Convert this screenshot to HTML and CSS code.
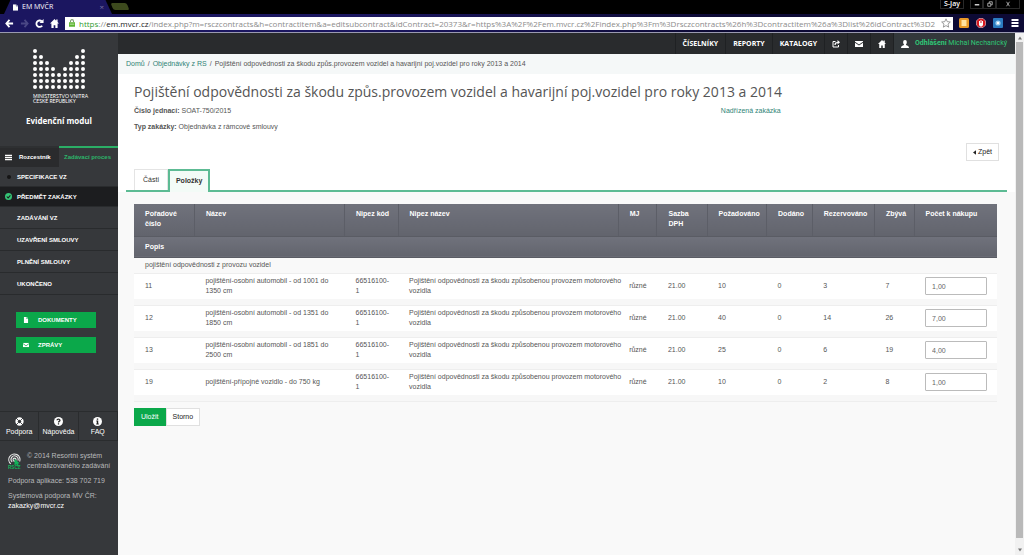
FILE: index.html
```html
<!DOCTYPE html>
<html lang="cs">
<head>
<meta charset="utf-8">
<title>EM MVČR</title>
<link rel="stylesheet" href="styles.css">
</head>
<body>
<svg class="defs" aria-hidden="true">
  <symbol id="mail" viewBox="0 0 16 12"><path d="M0 0h16v1.500L8 7 0 1.500zM0 3.500l8 5.500 8-5.500V12H0z"/></symbol>
  <symbol id="home" viewBox="0 0 16 16"><path d="M8 0 0 8h2.500v8h4v-5h3v5h4V8H16l-2.500-2.500V1h-2.500v2z"/></symbol>
  <symbol id="file" viewBox="0 0 12 16"><path d="M0 0h7v5h5v11H0zM8 0l4 4H8z"/></symbol>
</svg>

<div class="browser">
  <div class="tab-strip">
    <div class="browser-tab">
      <svg class="i-page" viewBox="0 0 12 16"><use href="#file"/></svg>
      <span>EM MVČR</span>
      <button class="tab-close" aria-label="Zavřít kartu">×</button>
    </div>
    <button class="new-tab" aria-label="Nová karta"></button>
    <div class="window-controls">
      <button class="profile">S-Jay</button>
      <button aria-label="Minimalizovat"><svg viewBox="0 0 8 8"><path d="M1 4h6v2H1z"/></svg></button>
      <button aria-label="Obnovit"><svg viewBox="0 0 8 8"><path class="line" d="M1 3h4v4H1zM3 3V1h4v4H5"/></svg></button>
      <button class="win-close" aria-label="Zavřít"><svg viewBox="0 0 8 8"><path class="line" d="m2 1 4 6M6 1 2 7"/></svg></button>
    </div>
  </div>
  <div class="toolbar">
    <button aria-label="Zpět"><svg viewBox="0 0 10 10"><path class="stroke" d="M9 5H2M5 1 1.500 5 5 9"/></svg></button>
    <button class="off" aria-label="Vpřed"><svg viewBox="0 0 10 10"><path class="stroke" d="M1 5h7M5 1l3.500 4L5 9"/></svg></button>
    <button aria-label="Obnovit stránku"><svg viewBox="0 0 10 10"><path class="stroke" d="M8 7.500A3.600 3.600 0 1 1 7.500 2.500"/><path d="M9.500 0v4.500H5z"/></svg></button>
    <button aria-label="Domů"><svg viewBox="0 0 16 16"><use href="#home"/></svg></button>
    <div class="address">
      <svg class="lock" viewBox="0 0 8 10"><path fill="#5cb531" d="M0 4h8v6H0z"/><path fill="none" stroke="#7d9b6e" stroke-width="1.400" d="M2 4V2.500a2 2 0 0 1 4 0V4"/><path fill="#d8efc9" d="M1 6h6v1H1z"/></svg>
      <div class="url"><span class="secure">https</span>://<b>em.mvcr.cz</b>/index.php?m=rsczcontracts&amp;h=contractitem&amp;a=editsubcontract&amp;idContract=20373&amp;r=https%3A%2F%2Fem.mvcr.cz%2Findex.php%3Fm%3Drsczcontracts%26h%3Dcontractitem%26a%3Dlist%26idContract%3D2</div>
      <svg class="star" viewBox="0 0 12 12"><path d="m6 1 1.500 3.400 3.700.4-2.800 2.500.8 3.700L6 9.100 2.800 11l.8-3.700L.8 4.800l3.700-.4z"/></svg>
    </div>
    <button class="ext" aria-label="Poznámky"><svg viewBox="0 0 10 10"><rect width="10" height="10" rx="1.500" fill="#e99a28"/><path fill="#ffe1a0" d="M2.500 2h5v6h-5z"/></svg></button>
    <button class="ext" aria-label="Blokování reklam"><svg viewBox="0 0 10 10"><path fill="#d71920" stroke="#f6d5d5" stroke-width=".6" d="M3 .4h4L9.600 3v4L7 9.600H3L.4 7V3z"/><path fill="#fff" d="M3 3h1v2h.5V2h1v3H6V3h1v4L6 8.500H4L3 7z"/></svg></button>
    <button class="ext" aria-label="Rozšíření"><svg viewBox="0 0 10 10"><rect width="10" height="10" rx="1" fill="#2b7cc0"/><circle cx="5" cy="5" r="2.600" fill="#9ccdf0"/><circle cx="5" cy="5" r="1.200" fill="#fff"/></svg></button>
    <button class="ext" aria-label="Nabídka"><svg viewBox="0 0 10 10"><path fill="#fff" d="M1.500 1h7v2h-7zm0 3h7v2h-7zm0 3h7v2h-7z"/></svg></button>
  </div>
</div>

<div class="viewport">
  <aside class="sidebar">
    <div class="brand">
      <svg class="logo" viewBox="0 0 54 42"><path d="M3 3v36.100M9 9v30.100M15 15v24.100M21 21v18.100M27 27v12.100M33 21v18.100M39 15v24.100M45 9v30.100M51 3v36.100"/></svg>
      <p class="ministry">MINISTERSTVO VNITRA<br>ČESKÉ REPUBLIKY</p>
      <p class="module">Evidenční modul</p>
    </div>
    <nav>
      <div class="side-tabs">
        <a href="#"><svg viewBox="0 0 10 10"><path d="M0 1h10v2H0zm0 3h10v2H0zm0 3h10v2H0z"/></svg>Rozcestník</a>
        <a href="#" class="on">Zadávací proces</a>
      </div>
      <ul class="steps">
        <li><a href="#"><i class="dot"></i>SPECIFIKACE VZ</a></li>
        <li class="current"><a href="#"><svg viewBox="0 0 10 10"><circle cx="5" cy="5" r="5" fill="#35c576"/><path fill="none" stroke="#1c1d1f" stroke-width="1.500" d="m2.500 5 2 2 3.200-3.500"/></svg>PŘEDMĚT ZAKÁZKY</a></li>
        <li><a href="#">ZADÁVÁNÍ VZ</a></li>
        <li><a href="#">UZAVŘENÍ SMLOUVY</a></li>
        <li><a href="#">PLNĚNÍ SMLOUVY</a></li>
        <li><a href="#">UKONČENO</a></li>
      </ul>
    </nav>
    <div class="side-actions">
      <button><svg viewBox="0 0 12 16"><use href="#file"/></svg><span>DOKUMENTY</span></button>
      <button><svg viewBox="0 0 16 12"><use href="#mail"/></svg><span>ZPRÁVY</span></button>
    </div>
    <div class="help">
      <a href="#"><svg viewBox="0 0 10 10"><circle cx="5" cy="5" r="3.300" fill="none" stroke="#fff" stroke-width="2.600"/><path stroke="#36383b" stroke-width="1" d="m1 1 2.500 2.500M9 1 6.500 3.500M1 9l2.500-2.500M9 9 6.500 6.500"/></svg>Podpora</a>
      <a href="#"><svg viewBox="0 0 10 10"><circle cx="5" cy="5" r="5" fill="#fff"/><path fill="none" stroke="#222" stroke-width="1.400" d="M3.300 3.700C3.400 1.800 6.700 1.800 6.600 3.700 6.500 4.800 5 4.700 5 6.200M5 7v1.400"/></svg>Nápověda</a>
      <a href="#"><svg viewBox="0 0 10 10"><circle cx="5" cy="5" r="5" fill="#fff"/><path fill="#222" d="M4.200 1.600h1.600v1.500H4.200zM3.700 4h2.100v3.200h.6v1.100H3.600V7.200h.6V5h-.5z"/></svg>FAQ</a>
    </div>
    <footer>
      <div class="copy">
        <svg viewBox="0 0 14 18"><g fill="none" stroke="#e8e8e8" stroke-width="1.200"><path d="M3 11.500A6 6 0 1 1 12.500 9M4.500 9.500A3.800 3.800 0 1 1 10.700 8"/><circle cx="7" cy="7" r="1.600"/></g><path fill="#12b35a" d="m7 6 5.500 5-2 .3L12 14l-1.500.7L9.200 12 7 13z"/><text x="0" y="17.500">RSCZ</text></svg>
        <p>© 2014 Resortní systém<br>centralizovaného zadávání</p>
      </div>
      <p>Podpora aplikace: 538 702 719</p>
      <p>Systémová podpora MV ČR:<br><a href="#">zakazky@mvcr.cz</a></p>
    </footer>
  </aside>

  <div class="page">
    <nav class="topbar">
      <a href="#">ČÍSELNÍKY</a>
      <a href="#">REPORTY</a>
      <a href="#">KATALOGY</a>
      <a href="#" class="icon" aria-label="Odkaz"><svg viewBox="0 0 16 16"><path fill="none" stroke="#fff" stroke-width="2" d="M7 3H2v11h11v-4"/><path fill="none" stroke="#fff" stroke-width="2.400" d="M6 10c0-4 2-5 6-5"/><path d="M11 0v9l5-4.500z"/></svg></a>
      <a href="#" class="icon" aria-label="Zprávy"><svg viewBox="0 0 16 12"><use href="#mail"/></svg></a>
      <a href="#" class="icon" aria-label="Domů"><svg viewBox="0 0 16 16"><use href="#home"/></svg></a>
      <a href="#" class="user"><svg viewBox="0 0 16 16"><path d="M8 0c5 0 4 7 2 9v1c3 1 6 2 6 6H0c0-4 3-5 6-6V9C4 7 3 0 8 0z"/></svg><span><b>Odhlášení</b> Michal Nechanický</span></a>
    </nav>
    <div class="crumbs"><a href="#">Domů</a><i>/</i><a href="#">Objednávky z RS</a><i>/</i><span>Pojištění odpovědnosti za škodu způs.provozem vozidel a havarijní poj.vozidel pro roky 2013 a 2014</span></div>
    <header class="head">
      <h1>Pojištění odpovědnosti za škodu způs.provozem vozidel a havarijní poj.vozidel pro roky 2013 a 2014</h1>
      <div class="meta">
        <div><p><b>Číslo jednací:</b> SOAT-750/2015</p><p><b>Typ zakázky:</b> Objednávka z rámcové smlouvy</p></div>
        <p><a href="#">Nadřízená zakázka</a></p>
      </div>
      <div class="back"><button class="btn"><svg viewBox="0 0 4 6"><path d="M4 0v6L0 3z"/></svg>Zpět</button></div>
      <div class="tabs"><a href="#">Části</a><a href="#" class="on">Položky</a></div>
    </header>
    <form class="items">
      <table>
        <colgroup><col class="c-no"><col class="c-name"><col class="c-code"><col class="c-desc"><col class="c-mj"><col class="c-vat"><col class="c-req"><col class="c-del"><col class="c-res"><col class="c-left"><col class="c-buy"></colgroup>
        <thead>
          <tr><th>Pořadové číslo</th><th>Název</th><th>Nipez kód</th><th>Nipez název</th><th>MJ</th><th>Sazba<br>DPH</th><th>Požadováno</th><th>Dodáno</th><th>Rezervováno</th><th>Zbývá</th><th>Počet k nákupu</th></tr>
          <tr class="sub"><th colspan="11">Popis</th></tr>
        </thead>
        <tbody>
          <tr class="note"><td colspan="11">pojištění odpovědnosti z provozu vozidel</td></tr>
          <tr><td>11</td><td>pojištění-osobní automobil - od 1001 do 1350 cm</td><td>66516100-1</td><td class="desc">Pojištění odpovědnosti za škodu způsobenou provozem motorového<br>vozidla</td><td>různé</td><td>21.00</td><td>10</td><td>0</td><td>3</td><td>7</td><td><input aria-label="Počet k nákupu, položka 11" value="1,00"></td></tr>
          <tr class="gap"><td colspan="11"></td></tr>
          <tr><td>12</td><td>pojištění-osobní automobil - od 1351 do 1850 cm</td><td>66516100-1</td><td class="desc">Pojištění odpovědnosti za škodu způsobenou provozem motorového<br>vozidla</td><td>různé</td><td>21.00</td><td>40</td><td>0</td><td>14</td><td>26</td><td><input aria-label="Počet k nákupu, položka 12" value="7,00"></td></tr>
          <tr class="gap"><td colspan="11"></td></tr>
          <tr><td>13</td><td>pojištění-osobní automobil - od 1851 do 2500 cm</td><td>66516100-1</td><td class="desc">Pojištění odpovědnosti za škodu způsobenou provozem motorového<br>vozidla</td><td>různé</td><td>21.00</td><td>25</td><td>0</td><td>6</td><td>19</td><td><input aria-label="Počet k nákupu, položka 13" value="4,00"></td></tr>
          <tr class="gap"><td colspan="11"></td></tr>
          <tr><td>19</td><td>pojištění-přípojné vozidlo - do 750 kg</td><td>66516100-1</td><td class="desc">Pojištění odpovědnosti za škodu způsobenou provozem motorového<br>vozidla</td><td>různé</td><td>21.00</td><td>10</td><td>0</td><td>2</td><td>8</td><td><input aria-label="Počet k nákupu, položka 19" value="1,00"></td></tr>
          <tr class="gap"><td colspan="11"></td></tr>
        </tbody>
      </table>
      <div class="form-actions"><button type="button" class="btn save">Uložit</button><button type="button" class="btn strong">Storno</button></div>
    </form>
  </div>

  <div class="scrollbar" aria-hidden="true">
    <svg viewBox="0 0 6 6"><path d="M3 1.500 5 4.500H1z"/></svg>
    <div class="thumb"></div>
    <svg viewBox="0 0 6 6"><path d="M3 4.500 1 1.500h4z"/></svg>
  </div>
</div>
</body>
</html>
```

FILE: styles.css
```css
* { box-sizing: border-box; }
body {
  margin: 0;
  min-height: 100vh;
  display: flex;
  flex-direction: column;
  font: 7px/10px "Liberation Sans", Arial, sans-serif;
  color: #555;
  background: #f9f9f9;
}
p, h1, ul { margin: 0; padding: 0; }
ul { list-style: none; }
a { color: inherit; text-decoration: none; }
button { font: inherit; color: inherit; border: 0; background: none; padding: 0; }
svg { display: block; fill: currentColor; flex: none; }
.defs { display: none; }

/* browser frame */
.browser { background: #000; color: #fff; border-bottom: 1px solid #9a9ab0; font-family: "Open Sans", sans-serif; }
.tab-strip { display: flex; align-items: flex-start; height: 14px; padding-left: 4px; }
.browser-tab {
  display: flex; align-items: center; gap: 4px;
  width: 108px; height: 14px; padding: 0 8px 0 9px;
  background: #1b1660; font-size: 7px; line-height: 12px;
  clip-path: polygon(6% 0, 94% 0, 100% 100%, 0 100%);
}
.browser-tab .i-page { width: 5px; height: 7px; }
.tab-close { margin-left: auto; color: #77739f; font-size: 8px; }
.new-tab { width: 16px; height: 7px; margin-top: 3px; background: #3d4a1d; border-radius: 2px; transform: skewX(22deg); }
.window-controls { display: flex; margin-left: auto; padding-right: 4px; }
.window-controls button { display: flex; align-items: center; justify-content: center; width: 13px; height: 9px; border: 1px solid #292929; border-top: 0; color: #ccc; }
.window-controls svg { width: 6px; height: 6px; }
.window-controls .profile { width: 24px; margin-right: 6px; color: #fff; font-size: 7px; font-weight: 600; }
.window-controls .win-close { width: 24px; }
.line { fill: none; stroke: currentColor; stroke-width: 1; }
.stroke { fill: none; stroke: currentColor; stroke-width: 2; }
.toolbar { display: flex; align-items: center; gap: 6px; height: 18px; padding: 0 4px 0 5px; background: linear-gradient(90deg, #1b1660 35%, #0d0a35 70%); }
.toolbar button svg { width: 9px; height: 9px; }
.toolbar .off { color: #4a4785; }
.address { flex: 1; min-width: 0; display: flex; align-items: center; height: 13px; padding: 0 2px 0 4px; background: #fff; }
.lock { width: 6px; height: 8px; }
.url { flex: 1; min-width: 0; margin-left: 4px; overflow: hidden; white-space: nowrap; font-size: 8px; line-height: 13px; color: #8b8b8b; }
.url b { font-weight: 400; color: #222; }
.url .secure { color: #2f9b2f; }
.star { width: 10px; height: 10px; fill: none; stroke: #888; }
.toolbar .ext svg { width: 10px; height: 10px; }
.ext + .ext { margin-left: 1px; }

.viewport { flex: 1; display: flex; }

/* sidebar */
.sidebar { flex: none; width: 118px; background: #36383b; color: #fff; }
.brand { height: 113px; padding-top: 15px; text-align: center; }
.logo { width: 54px; height: 42px; margin: 0 auto; }
.logo path { fill: none; stroke: #fff; stroke-width: 4; stroke-linecap: round; stroke-dasharray: 0 6; }
.ministry { width: 52px; margin: 4px auto 0; text-align: left; white-space: nowrap; font: 400 5px/5px Lato, sans-serif; }
.module { margin-top: 11px; font: 700 8px/12px "Open Sans", sans-serif; }
.side-tabs { display: grid; grid-template-columns: 1fr 1fr; font-weight: 700; line-height: 19px; }
.side-tabs a { display: flex; align-items: center; gap: 7px; padding-left: 5px; background: #2a2b2d; border-top: 2px solid #2e3032; font-size: 6px; white-space: nowrap; }
.side-tabs svg { width: 7px; height: 7px; }
.side-tabs .on { background: #36383b; border-color: #2bae66; color: #2cb56a; }
.steps a { display: flex; align-items: center; height: 22px; padding-left: 17px; border-bottom: 1px solid #292b2d; font-size: 6px; font-weight: 700; }
.steps li:nth-child(-n+2) a { height: 20px; }
.steps .current a { background: #1c1d1f; }
.steps svg { width: 7px; height: 7px; margin: 0 5px 0 -12px; }
.dot { width: 4px; height: 4px; margin: 0 6px 0 -10px; border-radius: 50%; background: #151515; }
.side-actions { display: grid; gap: 9px; padding: 17px 22px 58px 16px; }
.side-actions button { display: flex; align-items: center; gap: 9px; height: 16px; padding-left: 7px; background: #0ba84a; font-size: 6px; font-weight: 700; }
.side-actions svg { width: 6px; height: 6px; }
.help { display: grid; grid-template-columns: repeat(3, 1fr); border: 1px solid #2a2c2e; border-width: 1px 0; }
.help a { display: grid; justify-items: center; gap: 1px; padding: 5px 0 3px; border-right: 1px solid #2a2c2e; }
.help svg { width: 9px; height: 9px; }
footer { padding: 10px 8px; color: #b9babb; }
footer p + p, .copy + p { margin-top: 5px; }
.copy { display: flex; gap: 6px; white-space: nowrap; }
.copy svg { width: 13px; height: 17px; margin-top: 2px; }
.copy text { fill: #12b35a; font-size: 5px; font-weight: 700; }
footer a { color: #fff; }

/* page */
.page { flex: 1; min-width: 0; }
.topbar { display: flex; justify-content: flex-end; height: 21px; background: #292b2d; color: #fff; font: 700 7px/21px "Open Sans", sans-serif; }
.topbar a { display: flex; align-items: center; padding: 0 7px; border-left: 1px solid #1f2123; }
.topbar svg { width: 8px; height: 8px; }
.topbar .user { gap: 6px; padding-right: 8px; background: #33383b; font: 7px/21px Roboto, Arial, sans-serif; color: #2fc776; }
.user svg { fill: #fff; }
.crumbs { height: 20px; padding-left: 8px; line-height: 20px; background: #f5f8f8; }
.crumbs i { margin: 0 3px; font-style: normal; }
.crumbs a, .meta a { color: #2f8376; }
.head { padding: 8px 8px 0; background: #fff; }
h1 { margin-left: 8px; font: 400 14px/20px "Open Sans", sans-serif; color: #555; }
.meta { display: grid; grid-template-columns: 68% 1fr; margin: 4px 10px 0 8px; }
.meta p { margin-bottom: 6px; }
.back { display: flex; justify-content: flex-end; margin: 5px 8px 8px; }
.btn { display: inline-flex; align-items: center; justify-content: center; height: 18px; padding: 0 6px; gap: 2px; background: #fff; border: 1px solid #e0e0e0; color: #222; }
.btn svg { width: 3px; height: 5px; }
.strong { font-weight: 500; }
.tabs { display: flex; align-items: flex-end; padding-left: 8px; border-bottom: 2px solid #5dbb94; }
.tabs a { height: 21px; padding: 0 8px; line-height: 20px; border: 1px solid #e4e4e4; border-bottom: 0; color: #333; }
.tabs .on { height: 23px; margin-bottom: -2px; border: 2px solid #5dbb94; border-bottom: 0; background: #f3fbf7; font-weight: 700; padding: 0 6px; }

.items { padding: 12px 18px 16px 16px; }
table { width: 100%; table-layout: fixed; border-collapse: collapse; }
.c-no { width: 7%; } .c-name { width: 17.4%; } .c-code { width: 6.2%; } .c-desc { width: 25.5%; }
.c-mj { width: 4.5%; } .c-vat { width: 5.8%; } .c-req { width: 6.9%; } .c-del { width: 5.3%; }
.c-res { width: 7.2%; } .c-left { width: 4.6%; } .c-buy { width: 9.6%; }
th { height: 32px; padding: 5px 4px 5px 11px; vertical-align: top; text-align: left; color: #fff; background: linear-gradient(#70727c, #62646d); border-right: 1px solid #5c5e67; border-bottom: 1px solid #5a5c64; }
th:last-child { border-right: 0; }
.sub th { height: 21px; }
td { height: 26px; padding: 0 10px 0 11px; background: #fff; border-top: 1px solid #eee; }
td:nth-child(3) { padding-right: 6px; }
td.desc { padding-right: 0; white-space: nowrap; }
.note td { height: 16px; background: #f9f9f9; border: 0; }
.gap td { height: 6px; padding: 0; background: #f7f7f7; border: 0; }
.gap:last-child td { border-bottom: 1px solid #eee; }
td input { display: block; width: 100%; height: 18px; padding: 0 6px; border: 1px solid #bbb; border-radius: 1px; background: #fff; color: #666; font: inherit; }
.form-actions { display: flex; margin-top: 6px; }
.save { background: #0ba84a; border-color: #0ba84a; color: #fff; }

.scrollbar { flex: none; width: 9px; padding: 2px 1px; display: flex; flex-direction: column; align-items: center; gap: 1px; background: #f1f1f1; color: #777; }
.scrollbar svg { width: 6px; height: 6px; }
.thumb { flex: 1; width: 100%; margin-bottom: 8px; background: #b9b9b9; }
```
